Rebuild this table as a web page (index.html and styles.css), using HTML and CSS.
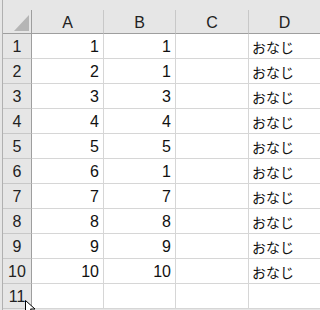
FILE: index.html
```html
<!DOCTYPE html>
<html lang="ja">
<head>
<meta charset="utf-8">
<link rel="stylesheet" href="styles.css">
</head>
<body>
<div class="frame">
  <div class="sheet">
    <div class="hdr corner"><span class="tri"></span></div>
    <div class="hdr col">A</div>
    <div class="hdr col">B</div>
    <div class="hdr col">C</div>
    <div class="hdr col">D</div>

    <div class="hdr row">1</div><div class="cell num">1</div><div class="cell num">1</div><div class="cell"></div><div class="cell txt">おなじ</div>
    <div class="hdr row">2</div><div class="cell num">2</div><div class="cell num">1</div><div class="cell"></div><div class="cell txt">おなじ</div>
    <div class="hdr row">3</div><div class="cell num">3</div><div class="cell num">3</div><div class="cell"></div><div class="cell txt">おなじ</div>
    <div class="hdr row">4</div><div class="cell num">4</div><div class="cell num">4</div><div class="cell"></div><div class="cell txt">おなじ</div>
    <div class="hdr row">5</div><div class="cell num">5</div><div class="cell num">5</div><div class="cell"></div><div class="cell txt">おなじ</div>
    <div class="hdr row">6</div><div class="cell num">6</div><div class="cell num">1</div><div class="cell"></div><div class="cell txt">おなじ</div>
    <div class="hdr row">7</div><div class="cell num">7</div><div class="cell num">7</div><div class="cell"></div><div class="cell txt">おなじ</div>
    <div class="hdr row">8</div><div class="cell num">8</div><div class="cell num">8</div><div class="cell"></div><div class="cell txt">おなじ</div>
    <div class="hdr row">9</div><div class="cell num">9</div><div class="cell num">9</div><div class="cell"></div><div class="cell txt">おなじ</div>
    <div class="hdr row">10</div><div class="cell num">10</div><div class="cell num">10</div><div class="cell"></div><div class="cell txt">おなじ</div>
    <div class="hdr row">11</div><div class="cell"></div><div class="cell"></div><div class="cell"></div><div class="cell"></div>
  </div>
  <svg class="cursor" width="12" height="14" viewBox="0 0 12 14">
    <path d="M0.5 0.5 L0.5 13 L3.5 10 L6 14 L8 13 L5.5 9 L10 9 Z" fill="#fff" stroke="#000" stroke-width="1"/>
  </svg>
</div>
</body>
</html>
```

FILE: styles.css
```css
html, body {
  margin: 0;
  padding: 0;
  background: #ffffff;
}
.frame {
  position: relative;
  width: 320px;
  height: 310px;
  overflow: hidden;
  background: #e6e6e6;
  padding-top: 10px;
  padding-left: 2px;
  box-sizing: border-box;
}
.frame::before {
  content: "";
  position: absolute;
  left: 2px;
  top: 0;
  bottom: 0;
  width: 1px;
  background: #b0b0b0;
}
.sheet {
  display: grid;
  grid-template-columns: 29px 72px 72px 73px 72px;
  grid-template-rows: 24px repeat(11, 25px);
  background: #ffffff;
  margin-left: 1px;
  font-family: "Liberation Sans", "Noto Sans CJK JP", sans-serif;
}
.hdr {
  background: #e6e6e6;
  color: #222;
  font-size: 16px;
  display: flex;
  align-items: center;
  justify-content: center;
  box-sizing: border-box;
}
.corner {
  border-right: 1px solid #9e9e9e;
  border-bottom: 1px solid #9e9e9e;
  position: relative;
}
.tri {
  position: absolute;
  right: 2px;
  bottom: 2px;
  width: 15px;
  height: 16px;
  background: #b5b5b5;
  clip-path: polygon(100% 0, 100% 100%, 0 100%);
}
.col {
  border-right: 1px solid #c8c8c8;
  border-bottom: 1px solid #9e9e9e;
  padding-top: 2px;
}
.row {
  border-right: 1px solid #9e9e9e;
  border-bottom: 1px solid #c8c8c8;
  padding-top: 2px;
}
.cell {
  border-right: 1px solid #d6d6d6;
  border-bottom: 1px solid #d6d6d6;
  box-sizing: border-box;
  font-size: 16px;
  color: #111;
  display: flex;
  align-items: center;
  padding: 2px 4px 0 4px;
}
.num {
  justify-content: flex-end;
}
.txt {
  font-family: "Noto Sans CJK JP", sans-serif;
  font-size: 14px;
  justify-content: flex-start;
  padding-left: 3px;
}
.cursor {
  position: absolute;
  left: 25px;
  top: 300px;
}
```
